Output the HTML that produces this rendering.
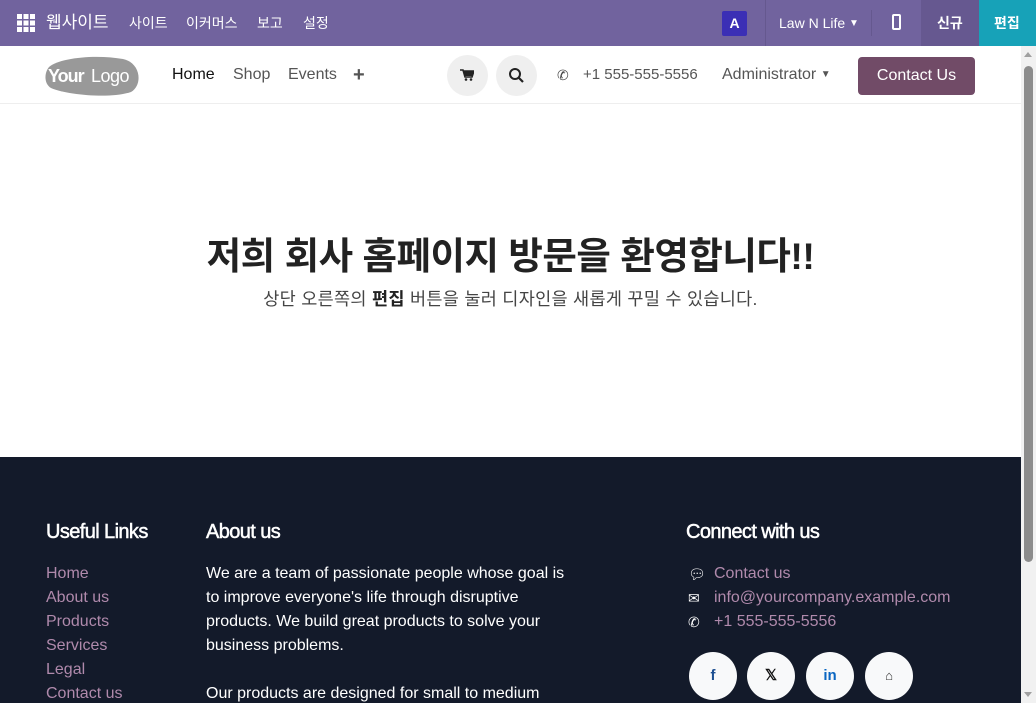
<!DOCTYPE html>
<html><head><meta charset="utf-8">
<style>
*{margin:0;padding:0;box-sizing:border-box}
body{width:1036px;height:703px;overflow:hidden;font-family:"Liberation Sans","Noto Sans CJK KR",sans-serif;background:#fff;position:relative}
.top{position:absolute;left:0;top:0;width:1036px;height:46px;background:#71639e;color:#fff}
.top span{position:absolute;top:0;line-height:46px;font-size:14px}
.hdr{position:absolute;left:0;top:46px;width:1021px;height:58px;background:#fff;border-bottom:1px solid #eee}
.hdr .t{position:absolute;line-height:58px;top:0;font-size:16px;color:#555}
.circ{position:absolute;top:9px;width:41px;height:41px;border-radius:50%;background:#efefef}
.sb{position:absolute;left:1021px;top:46px;width:15px;height:657px;background:#f1f1f1}
.foot{position:absolute;left:0;top:457px;width:1021px;height:246px;background:#131a2a;color:#fff}
.foot h4{position:absolute;top:64px;font-size:20px;font-weight:normal;letter-spacing:-0.6px;-webkit-text-stroke:0.5px #fff}
.lk{position:absolute;left:46px;top:105px;font-size:16px;line-height:24px;color:#b08aac}
.ab{position:absolute;left:206px;top:105px;font-size:16px;line-height:24px;width:366px}
.cn{position:absolute;left:714px;top:105px;font-size:16px;line-height:24px;color:#b08aac}
.soc{position:absolute;top:195px;width:48px;height:48px;border-radius:50%;background:#f8f9fa;color:#1d4f91;text-align:center;line-height:48px;font-weight:bold;font-size:15px}
</style></head><body>
<div class="top">
  <svg style="position:absolute;left:17px;top:14px" width="18" height="18" viewBox="0 0 18 18" fill="#fff"><rect x="0" y="0" width="5" height="5"/><rect x="6.5" y="0" width="5" height="5"/><rect x="13" y="0" width="5" height="5"/><rect x="0" y="6.5" width="5" height="5"/><rect x="6.5" y="6.5" width="5" height="5"/><rect x="13" y="6.5" width="5" height="5"/><rect x="0" y="13" width="5" height="5"/><rect x="6.5" y="13" width="5" height="5"/><rect x="13" y="13" width="5" height="5"/></svg>
  <span style="left:46px;font-size:17px">웹사이트</span>
  <span style="left:129px">사이트</span>
  <span style="left:186px">이커머스</span>
  <span style="left:257px">보고</span>
  <span style="left:303px">설정</span>
  <div style="position:absolute;left:722px;top:11px;width:25px;height:25px;background:#3b2fb5;border-radius:2px;text-align:center;line-height:25px;font-size:14px;font-weight:bold">A</div>
  <div style="position:absolute;left:765px;top:0;width:1px;height:46px;background:#65588f"></div>
  <span style="left:779px">Law N Life <span style="position:relative;font-size:10px;top:-2px">▼</span></span>
  <div style="position:absolute;left:871px;top:10px;width:1px;height:26px;background:#65588f"></div>
  <div style="position:absolute;left:892px;top:14px;width:9px;height:16px;border:2px solid #fff;border-radius:2px"></div>
  <div style="position:absolute;left:921px;top:0;width:58px;height:46px;background:#665890"></div>
  <span style="left:937px;font-weight:bold">신규</span>
  <div style="position:absolute;left:979px;top:0;width:57px;height:46px;background:#17a2b8"></div>
  <span style="left:994px;font-weight:bold">편집</span>
</div>
<div class="hdr">
  <svg style="position:absolute;left:45px;top:9px" width="96" height="42" viewBox="0 0 96 42"><path d="M4 12 C14 3 50 -1 78 4 C96 8 98 30 86 37 C66 44 22 40 6 33 C-1 29 -1 18 4 12Z" fill="#999"/><text x="3" y="27" font-family="Liberation Sans" font-weight="bold" font-size="18" letter-spacing="-1" fill="#fff">Your</text><text x="46" y="27" font-family="Liberation Sans" font-size="18" letter-spacing="-0.5" fill="#fff">Logo</text></svg>
  <span class="t" style="left:172px;color:#111">Home</span>
  <span class="t" style="left:233px">Shop</span>
  <span class="t" style="left:288px">Events</span>
  <span class="t" style="left:353px;font-size:20px;font-weight:bold">+</span>
  <div class="circ" style="left:447px"><svg style="position:absolute;left:13px;top:14px" width="14" height="12" viewBox="0 0 14 12"><path d="M0 1h3l2 7h7l2-6H4" fill="none" stroke="#222" stroke-width="1.6"/><rect x="4" y="2" width="9" height="5" fill="#222"/><circle cx="6" cy="10.5" r="1.3" fill="#222"/><circle cx="11" cy="10.5" r="1.3" fill="#222"/></svg></div>
  <div class="circ" style="left:496px"><svg style="position:absolute;left:12px;top:12px" width="17" height="17" viewBox="0 0 17 17"><circle cx="7" cy="7" r="5" fill="none" stroke="#222" stroke-width="2"/><path d="M10.5 10.5L15 15" stroke="#222" stroke-width="2.2"/></svg></div>
  <span class="t" style="left:557px;font-size:14px;color:#444">✆</span>
  <span class="t" style="left:583px;font-size:15px">+1 555-555-5556</span>
  <span class="t" style="left:722px;font-size:16px">Administrator <span style="font-size:10px;position:relative;top:-2px">▼</span></span>
  <div style="position:absolute;left:858px;top:11px;width:117px;height:38px;background:#714b67;border-radius:4px;color:#fff;font-size:16px;text-align:center;line-height:38px">Contact Us</div>
</div>
<div class="sb"><div style="position:absolute;left:3px;top:20px;width:9px;height:496px;background:#8c8c8c;border-radius:5px"></div><div style="position:absolute;left:3px;top:6px;border:4.5px solid transparent;border-bottom:5px solid #a0a0a0;border-top:0"></div><div style="position:absolute;left:3px;bottom:6px;border:4.5px solid transparent;border-top:5px solid #a0a0a0;border-bottom:0"></div></div>
<div style="position:absolute;left:0;top:231px;width:1021px;text-align:center;font-size:37.5px;font-weight:bold;color:#222;letter-spacing:-0.5px;line-height:50px">저희 회사 홈페이지 방문을 환영합니다!!</div>
<div style="position:absolute;left:0;top:286px;width:1021px;text-align:center;font-size:17.5px;color:#444;letter-spacing:0.3px">상단 오른쪽의 <b style="color:#222">편집</b> 버튼을 눌러 디자인을 새롭게 꾸밀 수 있습니다.</div>
<div class="foot">
  <h4 style="left:46px">Useful Links</h4>
  <h4 style="left:206px">About us</h4>
  <h4 style="left:686px">Connect with us</h4>
  <div class="lk">Home<br>About us<br>Products<br>Services<br>Legal<br>Contact us</div>
  <div class="ab">We are a team of passionate people whose goal is to improve everyone's life through disruptive products. We build great products to solve your business problems.<br><br>Our products are designed for small to medium</div>
  <div style="position:absolute;left:688px;top:105px;font-size:14px;line-height:24px;color:#fff">💬︎<br>✉︎<br>✆</div>
  <div class="cn">Contact us<br>info@yourcompany.example.com<br>+1 555-555-5556</div>
  <div class="soc" style="left:689px">f</div>
  <div class="soc" style="left:747px;color:#111">𝕏</div>
  <div class="soc" style="left:806px;color:#0a66c2">in</div>
  <div class="soc" style="left:865px;color:#333;font-size:13px">⌂</div>
</div>
</body></html>
